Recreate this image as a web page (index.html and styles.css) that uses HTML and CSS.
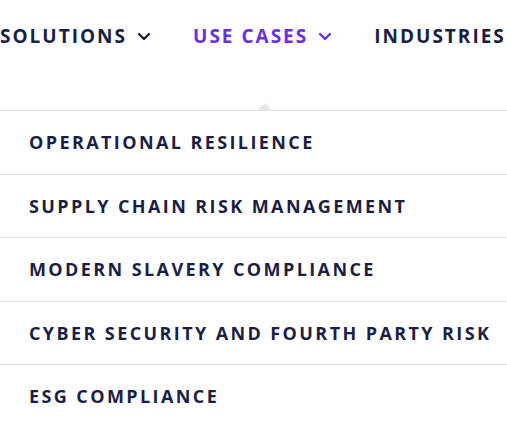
FILE: index.html
```html
<!DOCTYPE html>
<html lang="en">
  <head>
    <meta charset="UTF-8" />
    <meta name="viewport" content="width=device-width, initial-scale=1.0" />
    <title>Use cases menu</title>

    <link rel="stylesheet" href="styles.css">
  </head>
  <body>
    <nav class="main-nav">
      <a class="nav-link" href="#">SOLUTIONS
        <svg class="chevron" viewBox="0 0 14 9" width="14" height="9"><path d="M2 2l5 5 5-5" /></svg>
      </a>
      <a class="nav-link active" href="#">USE CASES
        <svg class="chevron" viewBox="0 0 14 9" width="14" height="9"><path d="M2 2l5 5 5-5" /></svg>
      </a>
      <a class="nav-link" href="#">INDUSTRIES</a>
    </nav>

    <!-- Dropdown for the active nav item -->
    <ul class="dropdown">
      <li><a href="#">OPERATIONAL RESILIENCE</a></li>
      <li><a href="#">SUPPLY CHAIN RISK MANAGEMENT</a></li>
      <li><a href="#">MODERN SLAVERY COMPLIANCE</a></li>
      <li><a href="#">CYBER SECURITY AND FOURTH PARTY RISK</a></li>
      <li><a href="#">ESG COMPLIANCE</a></li>
    </ul>
  </body>
</html>
```

FILE: styles.css
```css
/* Base */
body {
  margin: 0;
  background: #fff;
  font-family: "Open Sans", Arial, sans-serif;
  color: #1b1e44;
  overflow: hidden;
}

a {
  text-decoration: none;
  color: inherit;
}

/* Top navigation */
.main-nav {
  display: flex;
  align-items: center;
  gap: 42px;
  height: 72px;
  white-space: nowrap;
}

.nav-link {
  display: flex;
  align-items: center;
  gap: 10px;
  font-size: 19px;
  font-weight: 700;
  letter-spacing: 2px;
}

.nav-link.active {
  color: #6c2ee2;
}

.chevron {
  fill: none;
  stroke: currentColor;
  stroke-width: 2.4;
  stroke-linecap: round;
  stroke-linejoin: round;
}

/* Dropdown list */
.dropdown {
  position: relative;
  list-style: none;
  margin: 38px 0 0;
  padding: 0;
  border-top: 1px solid #e2e2e2;
}

/* little pointer under the active item */
.dropdown::before {
  content: "";
  position: absolute;
  top: -8px;
  left: 258px;
  border-left: 7px solid transparent;
  border-right: 7px solid transparent;
  border-bottom: 7px solid #e6e6e6;
}

.dropdown li {
  height: 62.5px;
  display: flex;
  align-items: center;
  padding-left: 29px;
  border-bottom: 1px solid #e2e2e2;
  font-size: 18px;
  font-weight: 700;
  letter-spacing: 2.4px;
  white-space: nowrap;
}

.dropdown li:last-child {
  border-bottom: none;
}
```
